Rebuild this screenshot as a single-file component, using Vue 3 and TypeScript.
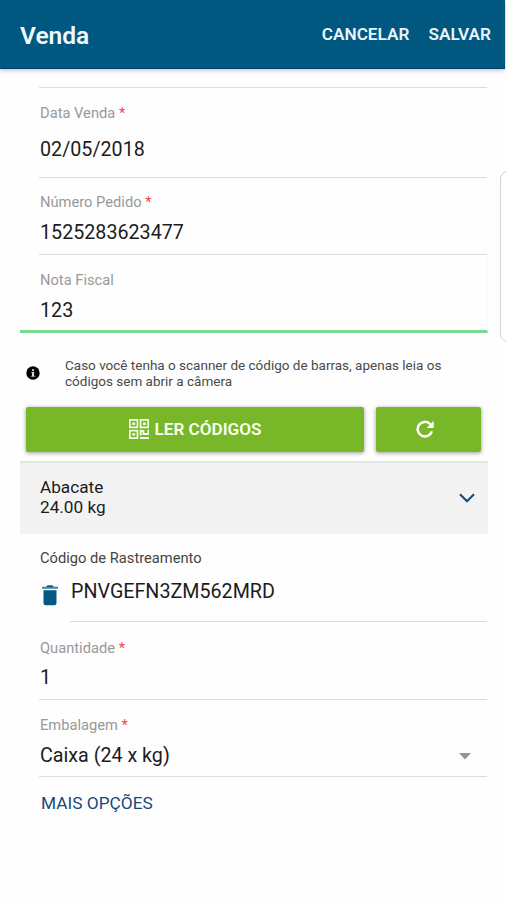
<script setup lang="ts">
interface Field {
  id: string
  label: string
  value: string
  required: boolean
}

const saleFields: Field[] = [
  { id: 'date', label: 'Data Venda', value: '02/05/2018', required: true },
  { id: 'order', label: 'Número Pedido', value: '1525283623477', required: true },
  { id: 'invoice', label: 'Nota Fiscal', value: '123', required: false },
]

const itemFields: Field[] = [
  { id: 'quantity', label: 'Quantidade', value: '1', required: true },
  { id: 'packaging', label: 'Embalagem', value: 'Caixa (24 x kg)', required: true },
]
</script>

<template>
  <div class="screen">
    <header class="toolbar">
      <h1 class="title">Venda</h1>
      <button class="action cancel">CANCELAR</button>
      <button class="action save">SALVAR</button>
    </header>

    <main class="content">
      <section class="fields">
        <div v-for="f in saleFields" :key="f.id" class="field" :class="f.id">
          <div class="label">{{ f.label }}<span v-if="f.required" class="req"> *</span></div>
          <div class="value">{{ f.value }}</div>
        </div>
      </section>

      <div class="hint">
        <svg class="info" viewBox="0 0 14 14">
          <circle cx="7" cy="7" r="6.7" fill="#000" />
          <path d="M6 3.2h2v1.9H6zM5.4 6h2.7v3.8h.7v1H5.3v-1H6V7h-.6z" fill="#d8d8d8" />
        </svg>
        <p class="hint-text">
          <span>Caso você tenha o scanner de código de barras, apenas leia os</span><br />
          <span>códigos sem abrir a câmera</span>
        </p>
      </div>

      <div class="buttons">
        <button class="btn read">
          <svg class="qr" viewBox="0 0 20 20" fill="none" stroke="#f4fbe9" stroke-width="1.7">
            <path d="M.85.85h7.6v7.6H.85zM11.55.85h7.6v7.6h-7.6zM.85 11.55h7.6v7.6H.85z" />
            <path d="M3.2 4.7h3M13.9 4.7h3M3.2 15.4h3" stroke-width="2.4" />
            <path d="M11.6 16.5v-5.7M11 12h3.4v3h5v-4.2M11 19.1h9" stroke-width="2" />
          </svg>
          <span>LER CÓDIGOS</span>
        </button>
        <button class="btn refresh">
          <svg class="reload" viewBox="0 0 18 18">
            <path d="M14.2 4.1A7.3 7.3 0 1 0 15.9 11.4" fill="none" stroke="#fff" stroke-width="2.5" />
            <path d="M17.7.8v7.1h-7.1z" fill="#fff" />
          </svg>
        </button>
      </div>

      <div class="product">
        <div class="product-text">
          <div>Abacate</div>
          <div>24.00 kg</div>
        </div>
        <svg class="chevron" viewBox="0 0 16 10">
          <path d="M1 1.2l7 7 7-7" fill="none" stroke="#164b86" stroke-width="2.2" />
        </svg>
      </div>

      <section class="tracking">
        <div class="track-label">Código de Rastreamento</div>
        <div class="track-row">
          <svg class="trash" viewBox="0 0 16 21">
            <path d="M0 1.7h4.3L5.5.4h5l1.2 1.3H16v2H0z" fill="#4382a8" />
            <path d="M4.3 1.9L5.5.4h5l1.2 1.5z" fill="#075783" />
            <path d="M1.5 5.2h13V18a2.2 2.2 0 0 1-2.2 2.2H3.7A2.2 2.2 0 0 1 1.5 18z" fill="#075783" />
          </svg>
          <div class="code">PNVGEFN3ZM562MRD</div>
        </div>
      </section>

      <section class="fields item">
        <div v-for="f in itemFields" :key="f.id" class="field" :class="f.id">
          <div class="label">{{ f.label }}<span v-if="f.required" class="req"> *</span></div>
          <div class="value">
            <span>{{ f.value }}</span>
            <svg v-if="f.id === 'packaging'" class="caret" viewBox="0 0 12 7">
              <path d="M0 0h12L6 6.5z" fill="#959595" />
            </svg>
          </div>
        </div>
      </section>

      <button class="more">MAIS OPÇÕES</button>
    </main>

    <div class="edge-handle"></div>
  </div>
</template>

<style>
body {
  margin: 0;
  background: #fefefe;
}
</style>

<style scoped>
.screen {
  position: relative;
  width: 506px;
  height: 900px;
  overflow: hidden;
  background: #fefefe;
  font-family: Roboto, 'Liberation Sans', sans-serif;
  color: #1c1c1c;
}
button {
  border: 0;
  padding: 0;
  background: none;
  font-family: inherit;
  white-space: nowrap;
}
.toolbar {
  box-sizing: border-box;
  width: 505px;
  height: 69px;
  padding: 0 14px 0 20px;
  display: flex;
  align-items: center;
  background: #00577f;
  border-bottom: 1px solid #004477;
  box-shadow: 0 1px 5px rgba(0, 0, 0, 0.28);
}
.title {
  margin: 4px auto 0 0;
  font-size: 24.5px;
  line-height: 30px;
  font-weight: 600;
  color: #eff8fc;
}
.action {
  font-size: 17.2px;
  line-height: 24px;
  font-weight: 600;
  color: #eaf4fa;
}
.save {
  margin-left: 19px;
}
.content {
  padding: 18px 18px 0 20px;
}
.fields {
  margin-left: 19px;
  width: 448px;
  border-top: 1px solid #dcdcdc;
}
.field {
  box-sizing: border-box;
  height: 77px;
  padding: 15px 0 0 1px;
  border-bottom: 1px solid #dcdcdc;
}
.label {
  font-size: 14.7px;
  line-height: 20px;
  color: #999;
  white-space: pre;
}
.req {
  color: #f5444c;
}
.value {
  display: flex;
  align-items: center;
  margin-top: 11px;
  height: 20px;
  font-size: 19.7px;
  line-height: 20px;
}
.date {
  height: 90px;
}
.date .value {
  margin-top: 17px;
}
.order {
  padding-top: 14px;
}
.invoice {
  width: 468px;
  height: 78px;
  margin-left: -19px;
  padding-left: 20px;
  border-bottom: 3px solid #7bda91;
  border-right: 1px solid #f4faf8;
}
.hint {
  display: flex;
  align-items: center;
  height: 32px;
  margin: 24px 0 0 6px;
}
.info {
  width: 14px;
  height: 14px;
}
.hint-text {
  margin: 0 0 0 25px;
  font-size: 13.5px;
  line-height: 16px;
  color: #4a4a4a;
  white-space: nowrap;
}
.buttons {
  display: flex;
  gap: 12px;
  margin: 18px 0 0 6px;
}
.btn {
  display: flex;
  align-items: center;
  justify-content: center;
  box-sizing: border-box;
  height: 45px;
  padding-bottom: 2px;
  border-radius: 2px;
  background: #77b728;
  color: #f8fff0;
  box-shadow: 0 1px 4px rgba(0, 0, 0, 0.4);
}
.read {
  width: 338px;
  font-size: 17.1px;
  font-weight: 600;
}
.refresh {
  width: 105px;
  padding-right: 7px;
}
.qr {
  width: 20px;
  height: 20px;
  margin-right: 6px;
}
.reload {
  width: 18px;
  height: 18px;
}
.product {
  box-sizing: border-box;
  display: flex;
  align-items: center;
  justify-content: space-between;
  width: 468px;
  height: 73px;
  margin-top: 9px;
  padding: 0 13px 0 20px;
  border-top: 2px solid #e4e4e4;
  background: #f3f3f3;
}
.product-text {
  margin-top: -4px;
  font-size: 17.2px;
  line-height: 20px;
}
.chevron {
  width: 16px;
  height: 10px;
  margin-top: -1px;
}
.tracking {
  box-sizing: border-box;
  height: 89px;
  padding: 14px 0 0 20px;
}
.track-label {
  font-size: 14.7px;
  line-height: 20px;
  color: #444;
}
.track-row {
  display: flex;
  align-items: flex-start;
  margin-top: 17px;
}
.trash {
  width: 16px;
  height: 21px;
  margin: 0 0 0 2px;
}
.code {
  box-sizing: border-box;
  width: 417px;
  height: 40px;
  margin: -3px 0 0 12px;
  padding-left: 1px;
  border-bottom: 1px solid #dcdcdc;
  font-size: 19.7px;
  line-height: 20px;
}
.item {
  border-top: 0;
}
.item .field {
  padding-top: 14px;
}
.item .label {
  padding-top: 1px;
}
.item .value {
  margin-top: 11px;
}
.quantity .label {
  margin-bottom: -1px;
}
.caret {
  width: 12px;
  height: 7px;
  margin: 0 16px 0 auto;
}
.more {
  display: block;
  margin: 16px 0 0 21px;
  font-size: 17.3px;
  line-height: 20px;
  color: #17497c;
}
.edge-handle {
  position: absolute;
  left: 500px;
  top: 171px;
  width: 20px;
  height: 169px;
  border: 1px solid #d2d2d2;
  border-radius: 8px;
}
</style>
